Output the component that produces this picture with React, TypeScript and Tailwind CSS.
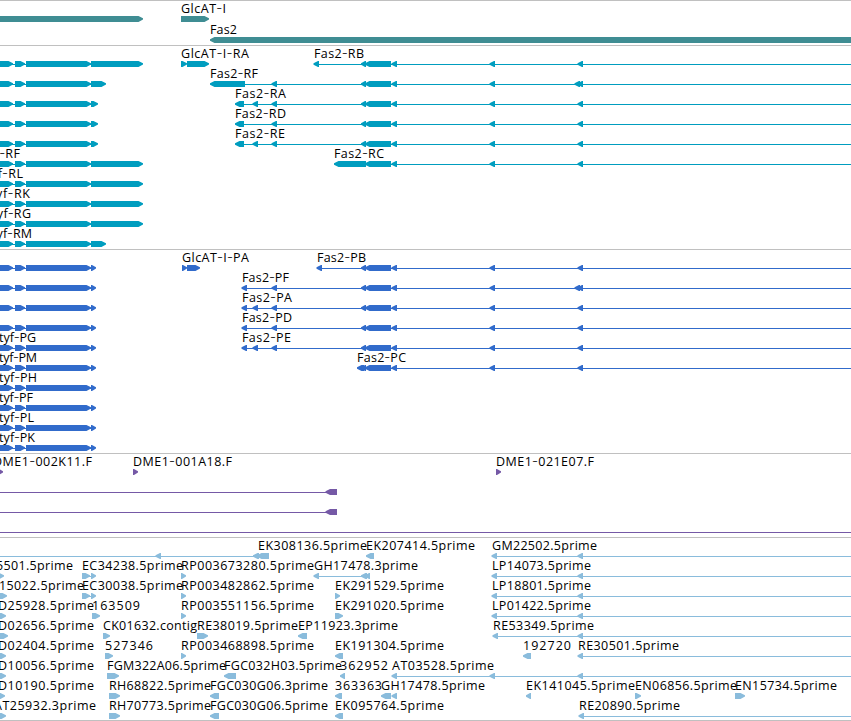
type Exon = [start: number, end: number];
type Label = [text: string, start: number, end: number];
type Row = {
  labels?: Label[];
  right?: Exon[];
  left?: Exon[];
  lines?: Exon[];
};
type Track = { name: string; color: string; box: string; rowClass: string; rows: Row[] };

const VIEW_END = 851;

// Exons shared by every tyf transcript, with a variable last exon.
const tyf = (end: number): Exon[] => [[-20, 13], [15, 25], [26, 91], [91, end]];
const tyfRow = (end: number, row: Row = {}): Row => ({
  labels: row.labels,
  right: [...tyf(end), ...(row.right ?? [])],
  left: row.left,
  lines: [[0, end - 2], ...(row.lines ?? [])],
});

// Exons shared by the Fas2 isoforms.
const fas2: Exon[] = [[361, 366], [365, 391], [391.5, 397], [489.5, 495], [577.5, 583]];
const tail: Exon[] = [[491.5, 497], [577.5, 583]];

const genes: Row[] = [
  { labels: [["GlcAT-I", 181, 226]], right: [[-20, 143], [181, 209]] },
  { labels: [["Fas2", 210, 237]], left: [[210, 870]] },
];

const transcripts: Row[] = [
  tyfRow(143, {
    labels: [["GlcAT-I-RA", 181, 249], ["Fas2-RB", 314, 364]],
    right: [[181, 187], [187, 209]],
    left: [[313.5, 319], ...fas2],
    lines: [[316, VIEW_END]],
  }),
  tyfRow(106, { labels: [["Fas2-RF", 210, 258]], left: [[210, 245], [271.5, 277], ...fas2, [574.5, 580]], lines: [[212, VIEW_END]] }),
  tyfRow(98, { labels: [["Fas2-RA", 235, 286]], left: [[235, 244], [252.5, 258], [271.5, 277], ...fas2], lines: [[237, VIEW_END]] }),
  tyfRow(98, { labels: [["Fas2-RD", 235, 286]], left: [[235, 244], [271.5, 277], ...fas2], lines: [[237, VIEW_END]] }),
  tyfRow(98, { labels: [["Fas2-RE", 235, 285]], left: [[235, 244], [252.5, 258], [271.5, 277], ...fas2], lines: [[237, VIEW_END]] }),
  tyfRow(143, { labels: [["tyf-RF", -17, 20], ["Fas2-RC", 334, 384]], left: [[334, 366], ...fas2], lines: [[336, VIEW_END]] }),
  tyfRow(143, { labels: [["tyf-RL", -14, 23]] }),
  tyfRow(143, { labels: [["tyf-RK", -9, 30]] }),
  tyfRow(143, { labels: [["tyf-RG", -8, 31]] }),
  tyfRow(106, { labels: [["tyf-RM", -8, 32]] }),
];

const proteins: Row[] = [
  tyfRow(96, {
    labels: [["GlcAT-I-PA", 182, 249], ["Fas2-PB", 317, 366]],
    right: [[182, 187], [187, 200]],
    left: [[316.5, 322], ...fas2],
    lines: [[319, VIEW_END]],
  }),
  tyfRow(96, { labels: [["Fas2-PF", 242, 289]], left: [[241.5, 247], [271.5, 277], ...fas2, [574.5, 580]], lines: [[244, VIEW_END]] }),
  tyfRow(96, { labels: [["Fas2-PA", 242, 292]], left: [[241.5, 247], [252.5, 258], [271.5, 277], ...fas2], lines: [[244, VIEW_END]] }),
  tyfRow(96, { labels: [["Fas2-PD", 242, 292]], left: [[241.5, 247], [271.5, 277], ...fas2], lines: [[244, VIEW_END]] }),
  tyfRow(96, { labels: [["tyf-PG", -1, 36], ["Fas2-PE", 242, 291]], left: [[241.5, 247], [252.5, 258], [271.5, 277], ...fas2], lines: [[244, VIEW_END]] }),
  tyfRow(96, { labels: [["tyf-PM", -1, 37], ["Fas2-PC", 357, 406]], left: [[357, 364], ...fas2], lines: [[359, VIEW_END]] }),
  tyfRow(96, { labels: [["tyf-PH", -1, 37]] }),
  tyfRow(96, { labels: [["tyf-PF", -1, 33]] }),
  tyfRow(96, { labels: [["tyf-PL", -1, 34]] }),
  tyfRow(96, { labels: [["tyf-PK", -1, 35]] }),
];

const bacs: Row[] = [
  {
    labels: [["DME1-002K11.F", -7, 92], ["DME1-001A18.F", 133, 232], ["DME1-021E07.F", 496, 594]],
    right: [[-2, 3], [133, 138], [496, 501]],
  },
  { left: [[325.5, 337]], lines: [[0, 330]] },
  { left: [[325.5, 337]], lines: [[0, 330]] },
  { lines: [[0, VIEW_END]] },
];

const ests: Row[] = [
  {
    labels: [["EK308136.5prime", 258, 367], ["EK207414.5prime", 366, 475], ["GM22502.5prime", 492, 597]],
    left: [[155.5, 161], [253, 259], [257, 269], [366, 374], ...tail],
    lines: [[0, 260], [493, VIEW_END]],
  },
  {
    labels: [["5501.5prime", -4, 73], ["EC34238.5prime", 82, 183], ["RP003673280.5prime", 181, 314], ["GH17478.3prime", 314, 418], ["LP14073.5prime", 492, 591]],
    right: [[-2, 4], [82, 90], [91, 96], [181, 186]],
    left: [[313.5, 319], [361, 367], [365, 370], ...tail],
    lines: [[84, 94], [316, 366], [493, VIEW_END]],
  },
  {
    labels: [["15022.5prime", -1, 84], ["EC30038.5prime", 82, 183], ["RP003482862.5prime", 181, 314], ["EK291529.5prime", 335, 444], ["LP18801.5prime", 492, 591]],
    right: [[-2, 7], [82, 90], [91, 96], [181, 186], [335, 340]],
    left: tail,
    lines: [[84, 94], [493, VIEW_END]],
  },
  {
    labels: [["D25928.5prime", -2, 94], ["163509", 92, 140], ["RP003551156.5prime", 181, 314], ["EK291020.5prime", 335, 444], ["LP01422.5prime", 492, 591]],
    right: [[-2, 6], [92, 100], [181, 186], [335, 343]],
    left: tail,
    lines: [[493, VIEW_END]],
  },
  {
    labels: [["D02656.5prime", -2, 94], ["CK01632.contig", 103, 197], ["RE38019.5prime", 197, 298], ["EP11923.3prime", 298, 398], ["RE53349.5prime", 493, 594]],
    right: [[-2, 8], [103, 110], [197, 208]],
    left: [[298, 307], [492.5, 498], [577.5, 583]],
    lines: [[494, VIEW_END]],
  },
  {
    labels: [["D02404.5prime", -2, 94], ["527346", 105, 153], ["RP003468898.5prime", 181, 314], ["EK191304.5prime", 335, 444], ["192720", 523, 571], ["RE30501.5prime", 578, 679]],
    right: [[-2, 6], [105, 113], [181, 186]],
    left: [[335, 343], [523, 531], [577.5, 583]],
    lines: [[580, VIEW_END]],
  },
  {
    labels: [["D10056.5prime", -2, 94], ["FGM322A06.5prime", 107, 226], ["FGC032H03.5prime", 224, 342], ["362952", 340, 388], ["AT03528.5prime", 392, 494]],
    right: [[-2, 6], [107, 119]],
    left: [[224, 236], [340, 345], [391.5, 397], [489.5, 495], [577.5, 583]],
    lines: [[394, VIEW_END]],
  },
  {
    labels: [["D10190.5prime", -2, 94], ["RH68822.5prime", 109, 211], ["FGC030G06.3prime", 210, 328], ["363363", 335, 382], ["GH17478.5prime", 381, 485], ["EK141045.5prime", 526, 635], ["EN06856.5prime", 635, 737], ["EN15734.5prime", 735, 837]],
    right: [[-2, 5], [109, 120], [635, 641], [735, 745]],
    left: [[210, 219], [335, 342], [381, 391], [391.5, 397], [526, 531]],
  },
  {
    labels: [["AT25932.3prime", -6, 96], ["RH70773.5prime", 109, 211], ["FGC030G06.5prime", 210, 328], ["EK095764.5prime", 335, 444], ["RE20890.5prime", 579, 680]],
    right: [[-2, 6], [109, 120]],
    left: [[210, 219], [335, 343], [578.5, 584]],
    lines: [[581, VIEW_END]],
  },
];

const tracks: Track[] = [
  { name: "Genes", color: "text-[#3f8d93]", box: "h-[45px]", rowClass: "h-[21px]", rows: genes },
  { name: "Transcripts", color: "text-[#009dbf]", box: "h-[204px]", rowClass: "h-5", rows: transcripts },
  { name: "Proteins", color: "text-[#316bcb]", box: "h-[204px]", rowClass: "h-5", rows: proteins },
  { name: "BAC ends", color: "text-[#7559a6]", box: "h-[84px]", rowClass: "h-5", rows: bacs },
  { name: "ESTs", color: "text-[#8abcdc]", box: "h-[183px]", rowClass: "h-5", rows: ests },
];

const TOP = 15;

function rightPoints([a, b]: Exon) {
  const s = Math.max(a + 1, b - 4.5);
  return `${a},${TOP} ${s},${TOP} ${b},${TOP + 2.2} ${b},${TOP + 3.4} ${s},${TOP + 6} ${a},${TOP + 6}`;
}

function leftPoints([a, b]: Exon) {
  const s = Math.min(b - 1, a + 4.5);
  return `${b},${TOP} ${s},${TOP} ${a},${TOP + 2.3} ${a},${TOP + 3.7} ${s},${TOP + 6} ${b},${TOP + 6}`;
}

function TrackRow({ row, className }: { row: Row; className: string }) {
  return (
    <svg className={`block w-full shrink-0 overflow-visible ${className}`}>
      <g fill="currentColor">
        {row.lines?.map(([a, b], i) => (
          <rect key={i} x={a} y={TOP + 3} width={b - a} height={1} />
        ))}
        {row.right?.map((e, i) => <polygon key={i} points={rightPoints(e)} />)}
        {row.left?.map((e, i) => <polygon key={i} points={leftPoints(e)} />)}
      </g>
      {row.labels?.map(([text, a, b]) => (
        <text key={text} x={a} y={TOP - 3} textLength={b - a} lengthAdjust="spacing" className="fill-black text-[12.5px]">
          {text.split(/(-)/).map((part, i) =>
            part === "-" ? <tspan key={i} className="text-[17px] font-light">-</tspan> : part,
          )}
        </text>
      ))}
    </svg>
  );
}

export default function App() {
  return (
    <main className="flex h-[721px] w-[851px] flex-col overflow-hidden border-b border-[#c0c0c0] bg-white font-['Open_Sans',sans-serif]">
      {tracks.map((t) => (
        <section key={t.name} className={`flex shrink-0 flex-col border-t border-[#c0c0c0] ${t.box} ${t.color}`}>
          {t.rows.map((row, i) => (
            <TrackRow key={i} row={row} className={t.rowClass} />
          ))}
        </section>
      ))}
    </main>
  );
}
